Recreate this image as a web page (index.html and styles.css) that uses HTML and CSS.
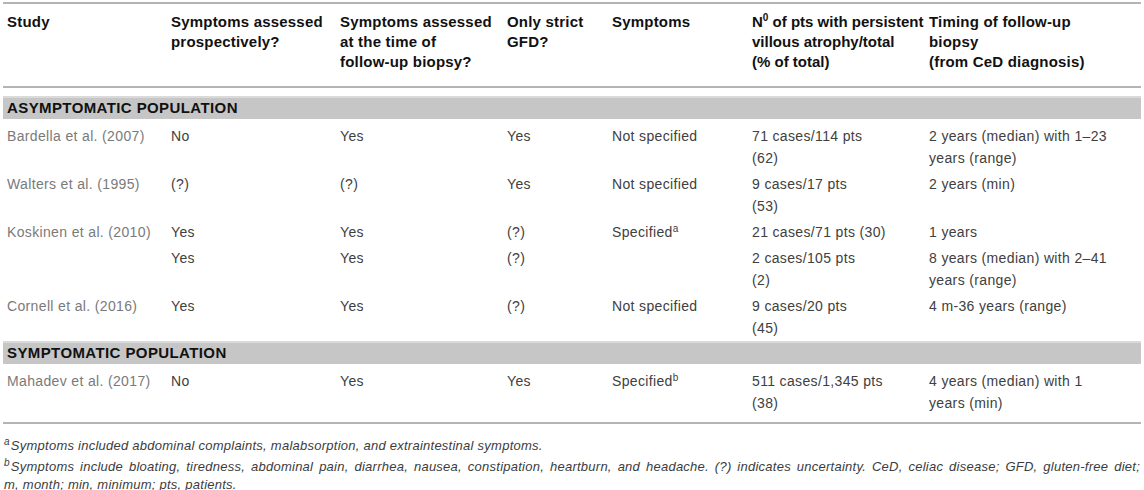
FILE: index.html
```html
<!DOCTYPE html>
<html>
<head>
<meta charset="utf-8">
<link rel="stylesheet" href="styles.css">
</head>
<body>
<div class="page">
<table class="tbl">
  <colgroup>
    <col class="c1"><col class="c2"><col class="c3"><col class="c4"><col class="c5"><col class="c6"><col class="c7">
  </colgroup>
  <thead>
    <tr>
      <th>Study</th>
      <th>Symptoms assessed prospectively?</th>
      <th>Symptoms assessed at the time of <span class="nw">follow-up</span> biopsy?</th>
      <th>Only strict GFD?</th>
      <th>Symptoms</th>
      <th class="nowrap">N<sup class="sup">0</sup> of pts with persistent<br>villous atrophy/total<br>(% of total)</th>
      <th class="last-col">Timing of <span class="nw">follow-up</span> biopsy<br>(from CeD diagnosis)</th>
    </tr>
  </thead>
  <tbody>
    <tr class="band first-band"><td colspan="7">ASYMPTOMATIC POPULATION</td></tr>
    <tr>
      <td class="study">Bardella et al. (2007)</td>
      <td>No</td>
      <td>Yes</td>
      <td>Yes</td>
      <td>Not specified</td>
      <td>71 cases/114 pts<br>(62)</td>
      <td class="last-col">2 years (median) with 1–23 years (range)</td>
    </tr>
    <tr>
      <td class="study">Walters et al. (1995)</td>
      <td>(?)</td>
      <td>(?)</td>
      <td>Yes</td>
      <td>Not specified</td>
      <td>9 cases/17 pts<br>(53)</td>
      <td class="last-col">2 years (min)</td>
    </tr>
    <tr>
      <td class="study">Koskinen et al. (2010)</td>
      <td>Yes</td>
      <td>Yes</td>
      <td>(?)</td>
      <td>Specified<sup class="fn">a</sup></td>
      <td>21 cases/71 pts (30)</td>
      <td class="last-col">1 years</td>
    </tr>
    <tr>
      <td class="study"></td>
      <td>Yes</td>
      <td>Yes</td>
      <td>(?)</td>
      <td></td>
      <td>2 cases/105 pts<br>(2)</td>
      <td class="last-col">8 years (median) with 2–41 years (range)</td>
    </tr>
    <tr>
      <td class="study">Cornell et al. (2016)</td>
      <td>Yes</td>
      <td>Yes</td>
      <td>(?)</td>
      <td>Not specified</td>
      <td>9 cases/20 pts<br>(45)</td>
      <td class="last-col">4 m-36 years (range)</td>
    </tr>
    <tr class="band second-band"><td colspan="7">SYMPTOMATIC POPULATION</td></tr>
    <tr class="last">
      <td class="study">Mahadev et al. (2017)</td>
      <td>No</td>
      <td>Yes</td>
      <td>Yes</td>
      <td>Specified<sup class="fn">b</sup></td>
      <td>511 cases/1,345 pts<br>(38)</td>
      <td class="last-col">4 years (median) with 1 years (min)</td>
    </tr>
  </tbody>
</table>
<div class="notes">
  <p><sup class="nfn">a</sup>Symptoms included abdominal complaints, malabsorption, and extraintestinal symptoms.</p>
  <p><span class="jline"><sup class="nfn">b</sup>Symptoms include bloating, tiredness, abdominal pain, diarrhea, nausea, constipation, heartburn, and headache. (?) indicates uncertainty. CeD, celiac disease; GFD, gluten-free diet;</span>m, month; min, minimum; pts, patients.</p>
</div>
</div>
</body>
</html>
```

FILE: styles.css
```css
html, body {
  margin: 0;
  padding: 0;
  background: #fff;
}
body {
  font-family: "Liberation Sans", Arial, Helvetica, sans-serif;
  color: #444;
}
.page {
  padding: 2px 3px 0 3px;
  width: 1138px;
}
.tbl {
  width: 1138px;
  border-collapse: separate;
  border-spacing: 0;
  table-layout: fixed;
  border-top: 2px solid #b4b4b4;
}
.c1 { width: 164px; }
.c2 { width: 169px; }
.c3 { width: 167px; }
.c4 { width: 105px; }
.c5 { width: 140px; }
.c6 { width: 177px; }
.c7 { width: 216px; }

.nw { white-space: nowrap; }
.nowrap { white-space: nowrap; }

.tbl th {
  text-align: left;
  vertical-align: top;
  font-weight: bold;
  font-size: 15px;
  letter-spacing: 0.2px;
  line-height: 20px;
  color: #111;
  padding: 8px 4px 14px 4px;
  border-bottom: 2px solid #b4b4b4;
}
.tbl th.nowrap {
  letter-spacing: 0;
}
.tbl .last-col {
  padding-right: 34px;
}
.sup {
  font-size: 10px;
  line-height: 0;
  vertical-align: 6px;
}
.tbl td {
  vertical-align: top;
  font-size: 14px;
  letter-spacing: 0.35px;
  line-height: 22px;
  color: #404040;
  padding: 2px 4px 2px 4px;
}
.tbl td.study {
  color: #7a7a7a;
}
.tbl tr.band td {
  background: #c6c6c6;
  border-bottom: 4px solid #fff;
  box-shadow: inset 0 2px 0 #dadada;
  font-weight: bold;
  font-size: 15px;
  letter-spacing: 0.4px;
  line-height: 23px;
  color: #111;
  padding: 0 4px;
}
.tbl tr.first-band td {
  border-top: 8px solid #fff;
}
.tbl tr.last td {
  padding-bottom: 8px;
  border-bottom: 2px solid #b4b4b4;
}
.fn {
  font-size: 10px;
  line-height: 0;
  vertical-align: 5px;
}
.notes {
  padding: 13px 1px 0 1px;
}
.notes p {
  margin: 0 0 3px 0;
  font-style: italic;
  font-size: 13px;
  line-height: 18px;
  color: #3c3c3c;
  letter-spacing: 0.25px;
}
.notes .jline {
  display: block;
  text-align: justify;
  text-align-last: justify;
}
.nfn {
  font-size: 10px;
  line-height: 0;
  vertical-align: 5px;
  margin-right: 1px;
}
```
